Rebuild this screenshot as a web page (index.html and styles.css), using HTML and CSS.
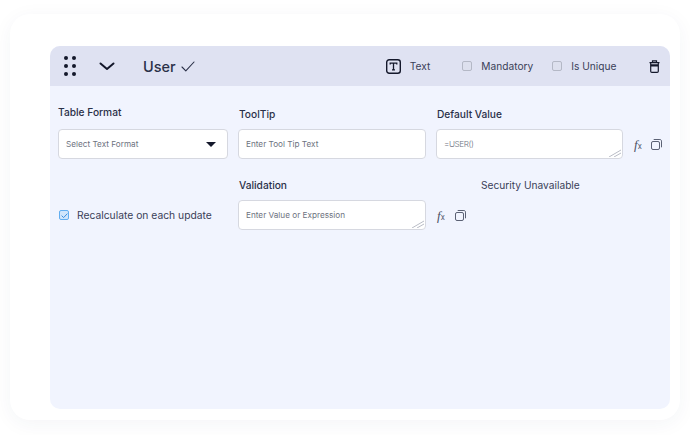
FILE: index.html
```html
<!DOCTYPE html>
<html lang="en">
<head>
<meta charset="utf-8">
<title>User field</title>
<link rel="stylesheet" href="styles.css">
</head>
<body>
<main class="card">
  <section class="panel">
    <header class="head">
      <svg class="grip" width="12" height="20" viewBox="0 0 12 20" fill="#14182b"><circle cx="2" cy="2" r="2"/><circle cx="10" cy="2" r="2"/><circle cx="2" cy="10" r="2"/><circle cx="10" cy="10" r="2"/><circle cx="2" cy="18" r="2"/><circle cx="10" cy="18" r="2"/></svg>
      <svg class="chev" width="16" height="9" viewBox="0 0 16 9" fill="none" stroke="#14182b" stroke-width="2" stroke-linecap="round" stroke-linejoin="round"><path d="M1.5 1.5 8 7l6.5-5.5"/></svg>
      <span class="name">User</span>
      <svg class="tick" width="14" height="11" viewBox="0 0 14 11" fill="none" stroke="#2a3048" stroke-width="1.1" stroke-linecap="round" stroke-linejoin="round"><path d="M1 6l3.8 3.8L13 1"/></svg>
      <svg class="type-icon" width="15" height="15" viewBox="0 0 15 15" fill="none"><rect x=".7" y=".7" width="13.6" height="13.6" rx="2.5" stroke="#14182b" stroke-width="1.4"/><path d="M4.2 5.6V4.2h6.6v1.4M7.5 4.2v6.6M6 10.8h3" stroke="#14182b" stroke-width="1.3"/></svg>
      <span class="head-text type-label">Text</span>
      <span class="box mand-box"></span>
      <span class="head-text">Mandatory</span>
      <span class="box uniq-box"></span>
      <span class="head-text">Is Unique</span>
      <svg class="trash" width="11" height="13" viewBox="0 0 11 13" fill="none" stroke="#14182b" stroke-width="1.2"><path d="M.5 2.6h10M3.5 2.4V.9h4v1.5M1.7 2.8v8.4c0 .7.5 1.2 1.2 1.2h5.2c.7 0 1.2-.5 1.2-1.2V2.8"/><path d="M2 4.2h7v2.4H2z" fill="#14182b" stroke="none"/></svg>
    </header>
    <div class="form">
      <div class="field">
        <span class="label label-raised">Table Format</span>
        <div class="input select"><span>Select Text Format</span><span class="caret"></span></div>
      </div>
      <div class="field">
        <span class="label">ToolTip</span>
        <div class="input"><span>Enter Tool Tip Text</span></div>
      </div>
      <div class="field">
        <span class="label">Default Value</span>
        <div class="input-row">
          <div class="input area"><span class="value">=USER()</span>
            <svg class="grab" width="13" height="8" viewBox="0 0 13 8" stroke="#b9bcc6" fill="none"><path d="M1 8 13 1M6 8l7-4"/></svg>
          </div>
          <span class="fx">f<small>x</small></span>
          <svg class="copy" width="11" height="11" viewBox="0 0 11 11" fill="none" stroke="#4a5064" stroke-width=".9"><rect x=".5" y="2.5" width="8" height="8" rx="1.5"/><path d="M2.7.5h6.2c.9 0 1.6.7 1.6 1.6v6.2"/></svg>
        </div>
      </div>
      <label class="recalc">
        <span class="check"><svg width="11" height="11" viewBox="0 0 11 11" fill="none" stroke="#3b8fe0" stroke-width="1"><path d="M2.6 5.6l2 2 3.8-4"/></svg></span>
        <span>Recalculate on each update</span>
      </label>
      <div class="field">
        <span class="label">Validation</span>
        <div class="input-row">
          <div class="input area area-wide"><span>Enter Value or Expression</span>
            <svg class="grab" width="13" height="8" viewBox="0 0 13 8" stroke="#b9bcc6" fill="none"><path d="M1 8 13 1M6 8l7-4"/></svg>
          </div>
          <span class="fx">f<small>x</small></span>
          <svg class="copy copy-low" width="11" height="11" viewBox="0 0 11 11" fill="none" stroke="#4a5064" stroke-width=".9"><rect x=".5" y="2.5" width="8" height="8" rx="1.5"/><path d="M2.7.5h6.2c.9 0 1.6.7 1.6 1.6v6.2"/></svg>
        </div>
      </div>
      <div class="security">Security Unavailable</div>
    </div>
  </section>
</main>
</body>
</html>
```

FILE: styles.css
```css
* { box-sizing: border-box; }
html, body { margin: 0; height: 100%; background: #fff; }
body {
  width: 690px;
  height: 435px;
  overflow: hidden;
  padding: 14px 10px 15px;
  font-family: Inter, "Liberation Sans", sans-serif;
  color: #2a3048;
}
.card {
  height: 406px;
  background: #fff;
  border-radius: 20px;
  box-shadow: 0 4px 20px rgba(40, 50, 90, 0.05);
  padding: 32px 10px 11px 40px;
}
.panel {
  height: 363px;
  background: #f1f4fe;
  border-radius: 10px;
  overflow: hidden;
}
.head {
  height: 40px;
  background: #dfe2f2;
  display: flex;
  align-items: center;
  padding-left: 14px;
}
.head svg { flex: none; }
.chev { margin-left: 23px; }
.name { margin-left: 28px; font-size: 14.5px; font-weight: 500; color: #2a3048; }
.tick { margin-left: 5px; margin-top: 1px; }
.type-icon { margin-left: 191px; }
.head-text { font-size: 10.2px; color: #3a4058; }
.type-label { margin-left: 9px; }
.box {
  width: 10px;
  height: 10px;
  border: 1px solid #b4b8c6;
  border-radius: 2px;
  background: #dde0ee;
}
.mand-box { margin-left: 32px; margin-right: 9px; }
.uniq-box { margin-left: 19px; margin-right: 9px; }
.trash { margin-left: 33px; }
.form {
  display: grid;
  grid-template-columns: 170px 188px 226px;
  column-gap: 10px;
  row-gap: 19px;
  padding: 21px 0 0 8px;
}
.field { display: flex; flex-direction: column; }
.label {
  font-size: 10.2px;
  font-weight: 500;
  line-height: 14px;
  margin-bottom: 8px;
  padding-left: 1px;
  color: #2a3048;
}
.label-raised { margin-top: -2px; margin-bottom: 10px; padding-left: 0; }
.input {
  position: relative;
  height: 30px;
  flex: none;
  background: #fff;
  border: 1px solid #d6d8e0;
  border-radius: 4px;
  padding: 0 7px;
  display: flex;
  align-items: center;
  font-size: 8.2px;
  color: #6d7280;
}
.value { letter-spacing: -0.4px; font-weight: 300; }
.select { justify-content: space-between; padding-right: 11px; }
.caret {
  width: 0;
  height: 0;
  border-left: 5px solid transparent;
  border-right: 5px solid transparent;
  border-top: 5px solid #14182b;
}
.input-row { display: flex; align-items: center; }
.area { width: 187px; }
.area-wide { width: 188px; }
.input-row .area { flex: none; }
.grab { position: absolute; right: 1px; bottom: 1px; }
.fx {
  flex: none;
  margin-left: 11px;
  margin-top: 1px;
  font: italic 13px "Liberation Serif", serif;
  color: #4a5064;
  width: 15px;
}
.fx small { font: 7.5px Inter, sans-serif; }
.copy { flex: none; margin-left: 2px; margin-top: 1px; }
.copy-low { margin-left: 3px; margin-top: 0; }
.recalc {
  display: flex;
  align-items: center;
  align-self: end;
  height: 30px;
  font-size: 10.3px;
  color: #3a4058;
  padding-left: 1px;
}
.check {
  width: 10px;
  height: 10px;
  margin-right: 8px;
  border: 1px solid #62aef0;
  border-radius: 2px;
  background: #cfe5fb;
  display: flex;
}
.check svg { margin: -1px; flex: none; }
.security {
  font-size: 10.2px;
  line-height: 14px;
  color: #3a4058;
  padding-left: 45px;
}
```
